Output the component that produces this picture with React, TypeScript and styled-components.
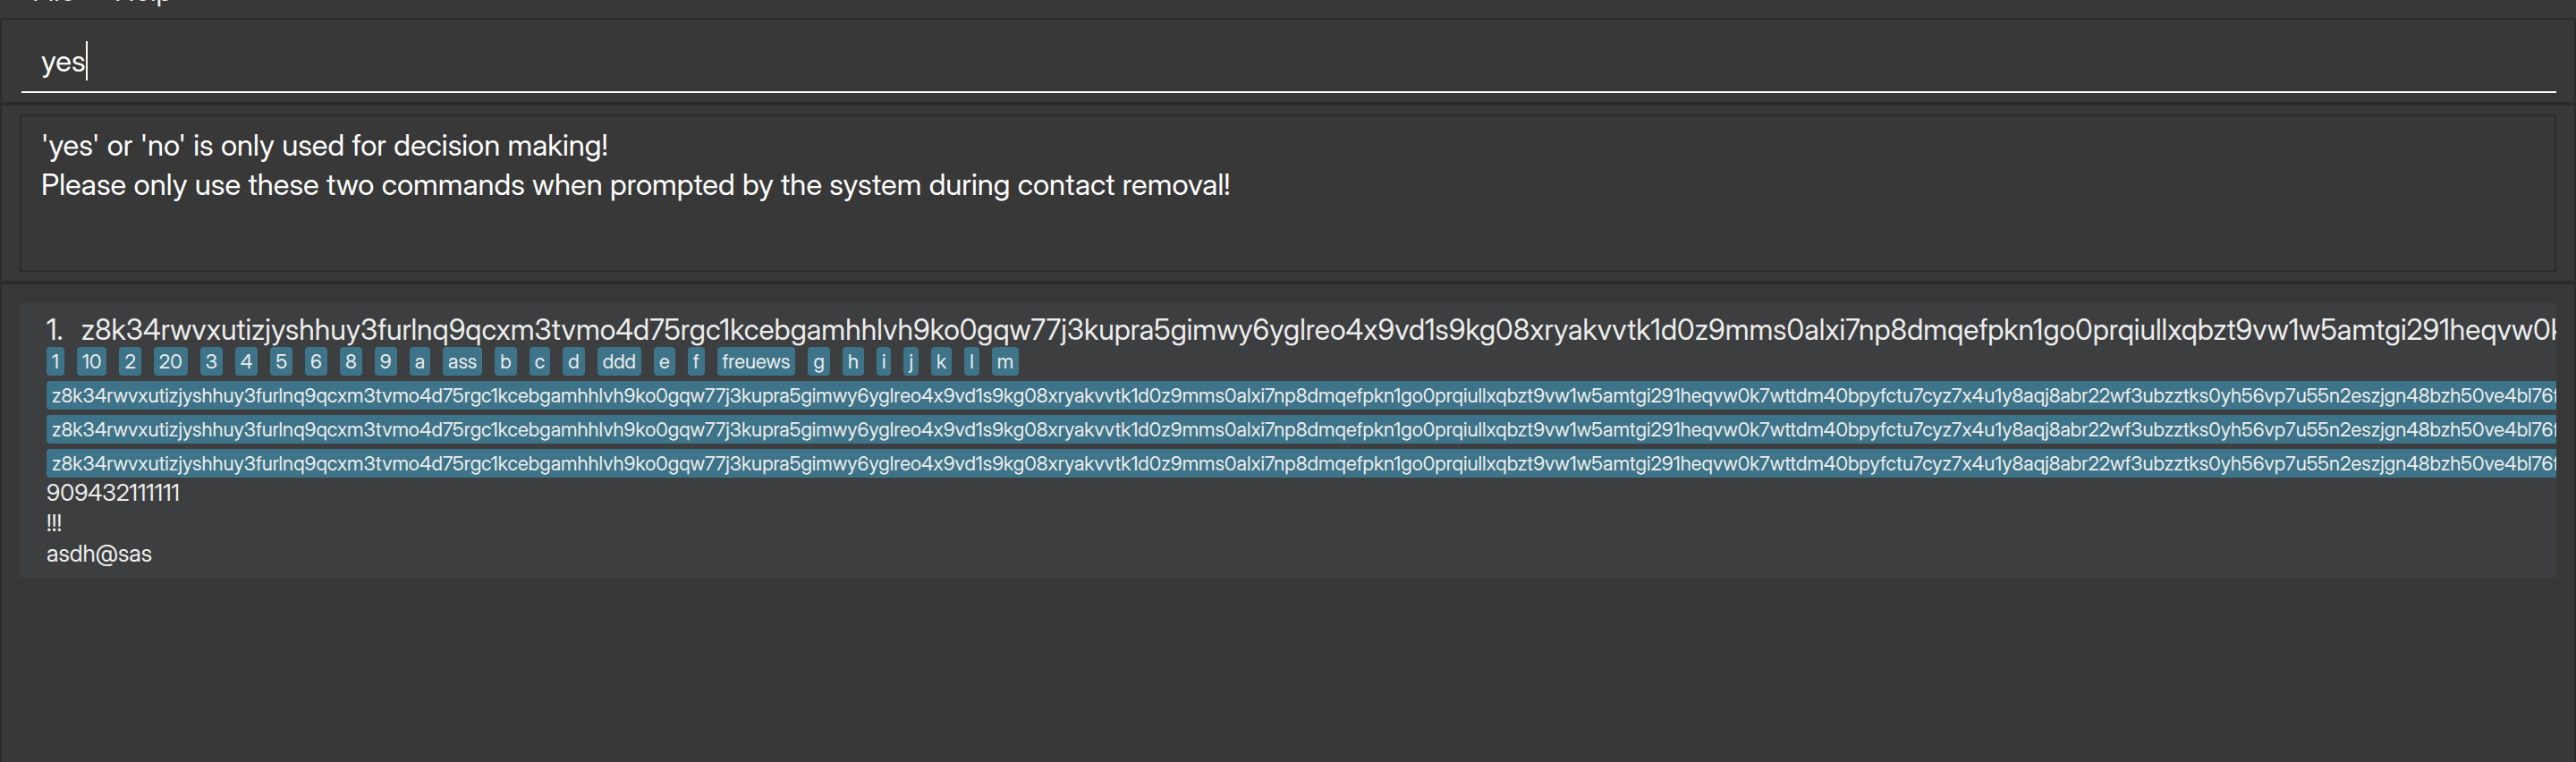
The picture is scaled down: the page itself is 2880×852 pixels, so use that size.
import { useState } from "react";
import styled, { createGlobalStyle } from "styled-components";

const colors = {
  surface: "#383838",
  edge: "#2b2b2b",
  card: "#3c3e3f",
  tag: "#3e7489",
  text: "#ffffff",
  cardText: "#ececec",
};

const GlobalStyle = createGlobalStyle`
  * {
    box-sizing: border-box;
  }
  body {
    margin: 0;
    background: ${colors.surface};
    color: ${colors.text};
    font-family: "Inter Display", Inter, "Liberation Sans", sans-serif;
    font-feature-settings: "calt" 0;
  }
`;

const Window = styled.div`
  display: flex;
  flex-direction: column;
  min-height: 100vh;
`;

const MenuBar = styled.nav`
  display: flex;
  align-items: flex-end;
  gap: 44px;
  height: 20px;
  padding: 0 36px 14px;
  overflow: hidden;
`;

const MenuButton = styled.button`
  padding: 0;
  border: 0;
  background: none;
  color: ${colors.cardText};
  font: inherit;
  font-size: 32px;
  line-height: 32px;
`;

const Pane = styled.section<{ $padding: string; $grow?: boolean }>`
  flex: ${(p) => (p.$grow ? "1 0 auto" : "none")};
  padding: ${(p) => p.$padding};
  border: 2px solid ${colors.edge};
  border-bottom-width: ${(p) => (p.$grow ? "0" : "2px")};
`;

const CommandField = styled.label`
  display: flex;
  align-items: center;
  height: 82px;
  padding: 12px 22px 0;
  border-bottom: 2px solid ${colors.text};
`;

const CommandInput = styled.input`
  field-sizing: content;
  padding: 0;
  border: 0;
  outline: 0;
  background: none;
  color: inherit;
  caret-color: transparent;
  font: inherit;
  font-feature-settings: inherit;
  font-size: 33px;
  line-height: 44px;
`;

const Caret = styled.span`
  width: 2px;
  height: 44px;
  background: ${colors.text};
`;

const ResultBox = styled.output`
  display: block;
  min-height: 176px;
  padding: 10px 22px;
  border: 2px solid ${colors.edge};
  font-size: 33px;
  line-height: 44px;
  white-space: pre-line;
`;

const PersonList = styled.ol`
  margin: 0;
  padding: 0;
  list-style: none;
`;

const PersonCard = styled.li`
  padding: 12px 0 10px 30px;
  overflow: hidden;
  background: ${colors.card};
  color: ${colors.cardText};
  white-space: nowrap;
`;

const NameRow = styled.h2`
  display: flex;
  gap: 20px;
  margin: 0;
  font-size: 32px;
  font-weight: 400;
  line-height: 38px;
`;

const TagRows = styled.div`
  display: flex;
  flex-direction: column;
  align-items: flex-start;
  gap: 6px;
`;

const TagRow = styled.div`
  display: flex;
  gap: 14px;
`;

const Tag = styled.span`
  padding: 0 6px;
  border-radius: 4px;
  background: ${colors.tag};
  font-size: 22px;
  line-height: 32px;
`;

const Detail = styled.p`
  margin: 0;
  font-size: 26px;
  line-height: 34px;
`;

const LONG_NAME =
  "z8k34rwvxutizjyshhuy3furlnq9qcxm3tvmo4d75rgc1kcebgamhhlvh9ko0gqw77j3kupra5gimwy6yglreo4x9vd1s9kg08xryakvvtk1d0z9mms0alxi7np8dmqefpkn1go0prqiullxqbzt9vw1w5amtgi291heqvw0k7wttdm40bpyfctu7cyz7x4u1y8aqj8abr22wf3ubzztks0yh56vp7u55n2eszjgn48bzh50ve4bl76fg5a";

const SHORT_TAGS = [
  "1", "10", "2", "20", "3", "4", "5", "6", "8", "9", "a", "ass", "b", "c",
  "d", "ddd", "e", "f", "freuews", "g", "h", "i", "j", "k", "l", "m",
];

const person = {
  name: LONG_NAME,
  tagRows: [SHORT_TAGS, [LONG_NAME], [LONG_NAME], [LONG_NAME]],
  details: ["909432111111", "!!!", "asdh@sas"],
};

const RESULT =
  "'yes' or 'no' is only used for decision making!\n" +
  "Please only use these two commands when prompted by the system during contact removal!";

export default function App() {
  const [command, setCommand] = useState("yes");

  return (
    <Window>
      <GlobalStyle />
      <MenuBar>
        <MenuButton type="button">File</MenuButton>
        <MenuButton type="button">Help</MenuButton>
      </MenuBar>
      <Pane $padding="0 20px 10px 22px">
        <CommandField>
          <CommandInput
            aria-label="Command"
            value={command}
            onChange={(e) => setCommand(e.target.value)}
          />
          <Caret />
        </CommandField>
      </Pane>
      <Pane $padding="10px 20px">
        <ResultBox>{RESULT}</ResultBox>
      </Pane>
      <Pane $padding="20px" $grow>
        <PersonList>
          <PersonCard>
            <NameRow>
              <span>1.</span>
              <span>{person.name}</span>
            </NameRow>
            <TagRows>
              {person.tagRows.map((row, r) => (
                <TagRow key={r}>
                  {row.map((tag) => (
                    <Tag key={tag}>{tag}</Tag>
                  ))}
                </TagRow>
              ))}
            </TagRows>
            {person.details.map((detail) => (
              <Detail key={detail}>{detail}</Detail>
            ))}
          </PersonCard>
        </PersonList>
      </Pane>
    </Window>
  );
}
